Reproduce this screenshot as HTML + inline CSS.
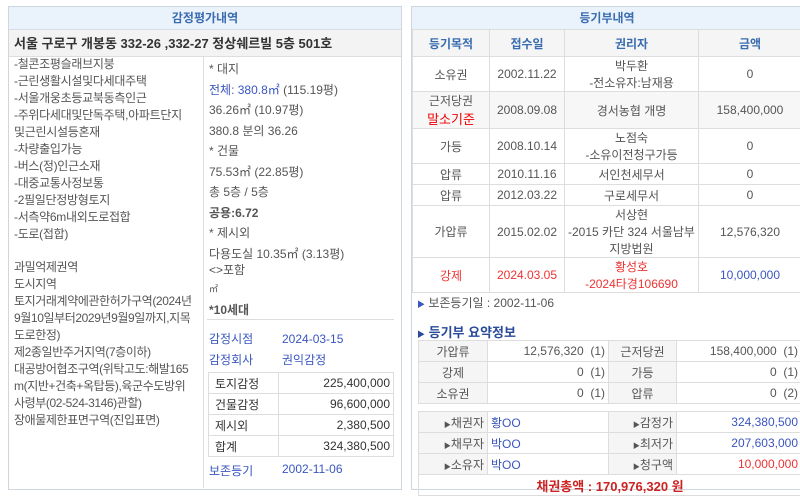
<!DOCTYPE html>
<html><head><meta charset="utf-8"><style>
*{margin:0;padding:0;box-sizing:border-box}
body{width:800px;height:488px;overflow:hidden;background:#fff;font-family:"Liberation Sans","Noto Sans CJK KR","NanumGothic",sans-serif;font-size:12px;color:#555;position:relative}
.a{position:absolute;white-space:nowrap}
.blue{color:#3a56c0}
.hd{background:#eaf2fc;color:#3a6cb0;font-weight:bold;text-align:center;line-height:22px;border-bottom:1px solid #d5dde8}
table{border-collapse:collapse;position:absolute}
td{border:1px solid #ddd;text-align:center;padding:0 3px}
</style></head><body>
<!-- left panel -->
<div class="a" style="left:8px;top:6px;width:394px;height:484px;border:1px solid #cfd6df"></div>
<div class="a hd" style="left:9px;top:7px;width:392px;height:23px">감정평가내역</div>
<div class="a" style="left:9px;top:30px;width:392px;height:27px;background:#f3f3f3;border-bottom:1px solid #ddd;font-size:13px;font-weight:bold;color:#333;padding-left:5px;line-height:27px">서울 구로구 개봉동 332-26 ,332-27 정상쉐르빌 5층 501호</div>
<div class="a" style="left:203px;top:57px;width:1px;height:431px;background:#ddd"></div>
<div class="a" style="left:14px;top:56px;line-height:17px;letter-spacing:-0.3px">-철콘조평슬래브지붕<br>-근린생활시설및다세대주택<br>-서울개웅초등교북동측인근<br>-주위다세대및단독주택,아파트단지<br>및근린시설등혼재<br>-차량출입가능<br>-버스(정)인근소재<br>-대중교통사정보통<br>-2필일단정방형토지<br>-서측약6m내외도로접합<br>-도로(접합)</div>
<div class="a" style="left:14px;top:259px;line-height:17px;letter-spacing:-0.4px">과밀억제권역<br>도시지역<br>토지거래계약에관한허가구역(2024년<br>9월10일부터2029년9월9일까지,지목<br>도로한정)<br>제2종일반주거지역(7층이하)<br>대공방어협조구역(위탁고도:해발165<br>m(지반+건축+옥탑등),육군수도방위<br>사령부(02-524-3146)관할)<br>장애물제한표면구역(진입표면)</div>
<div class="a" style="left:209px;top:59px;line-height:20.5px">* 대지<br><span class="blue">전체: 380.8㎡</span> (115.19평)<br>36.26㎡ (10.97평)<br>380.8 분의 36.26<br>* 건물<br>75.53㎡ (22.85평)<br>총 5층 / 5층<br><b>공용:6.72</b><br>* 제시외<br>다용도실 10.35㎡ (3.13평)</div>
<div class="a" style="left:209px;top:261px;line-height:18px">&lt;&gt;포함<br><span style="font-size:9px">㎡</span><br><b style="line-height:24px">*10세대</b></div>
<div class="a" style="left:207px;top:319px;width:187px;height:1px;background:#ddd"></div>
<div class="a blue" style="left:209px;top:329px;line-height:21px">감정시점<br>감정회사</div>
<div class="a blue" style="left:282px;top:329px;line-height:21px">2024-03-15<br>권익감정</div>
<table style="left:208px;top:372px;width:186px;font-size:12px;color:#333">
<tr style="height:21px"><td style="text-align:left;padding-left:6px;width:70px">토지감정</td><td style="text-align:right">225,400,000</td></tr>
<tr style="height:21px"><td style="text-align:left;padding-left:6px">건물감정</td><td style="text-align:right">96,600,000</td></tr>
<tr style="height:21px"><td style="text-align:left;padding-left:6px">제시외</td><td style="text-align:right">2,380,500</td></tr>
<tr style="height:21px"><td style="text-align:left;padding-left:6px">합계</td><td style="text-align:right">324,380,500</td></tr>
</table>
<div class="a blue" style="left:209px;top:462px">보존등기</div>
<div class="a blue" style="left:282px;top:462px">2002-11-06</div>

<!-- right panel -->
<div class="a" style="left:411px;top:6px;width:395px;height:484px;border:1px solid #cfd6df"></div>
<div class="a hd" style="left:412px;top:7px;width:390px;height:23px">등기부내역</div>
<table style="left:412px;top:29px;width:390px;color:#555">
<tr style="height:27px;background:#f5f5f5;color:#3a6cb0;font-weight:bold"><td style="width:77px">등기목적</td><td style="width:75px">접수일</td><td style="width:134px">권리자</td><td>금액</td></tr>
<tr style="height:35px"><td>소유권</td><td>2002.11.22</td><td>박두환<br>-전소유자:남재용</td><td>0</td></tr>
<tr style="height:34px;background:#f7f7f7"><td>근저당권<br><span style="color:#e00;font-size:13px">말소기준</span></td><td>2008.09.08</td><td>경서농협 개명</td><td>158,400,000</td></tr>
<tr style="height:35px"><td>가등</td><td>2008.10.14</td><td>노점숙<br>-소유이전청구가등</td><td>0</td></tr>
<tr style="height:21px"><td>압류</td><td>2010.11.16</td><td>서인천세무서</td><td>0</td></tr>
<tr style="height:21px"><td>압류</td><td>2012.03.22</td><td>구로세무서</td><td>0</td></tr>
<tr style="height:51px"><td>가압류</td><td>2015.02.02</td><td>서상현<br>-2015 카단 324 서울남부<br>지방법원</td><td>12,576,320</td></tr>
<tr style="height:35px;color:#e33"><td>강제</td><td>2024.03.05</td><td>황성호<br>-2024타경106690</td><td style="color:#3a56c0">10,000,000</td></tr>
</table>
<div class="a" style="left:417px;top:294px"><span style="font-size:8px;color:#3a56c0">▶</span> 보존등기일 : 2002-11-06</div>
<div class="a" style="left:417px;top:322px;font-weight:bold;color:#2a4a9a;font-size:13px"><span style="font-size:8px">▶</span> 등기부 요약정보</div>
<table style="left:418px;top:340px;width:384px">
<tr style="height:21px"><td style="width:69px;background:#f5f5f5">가압류</td><td style="text-align:right;width:121px">12,576,320 &nbsp;(1)</td><td style="width:68px;background:#f5f5f5">근저당권</td><td style="text-align:right">158,400,000 &nbsp;(1)</td></tr>
<tr style="height:21px"><td style="background:#f5f5f5">강제</td><td style="text-align:right">0 &nbsp;(1)</td><td style="background:#f5f5f5">가등</td><td style="text-align:right">0 &nbsp;(1)</td></tr>
<tr style="height:21px"><td style="background:#f5f5f5">소유권</td><td style="text-align:right">0 &nbsp;(1)</td><td style="background:#f5f5f5">압류</td><td style="text-align:right">0 &nbsp;(2)</td></tr>
</table>
<table style="left:418px;top:411px;width:384px">
<tr style="height:21px"><td style="width:69px;background:#f5f5f5;text-align:right"><span style="font-size:7px">▶</span>채권자</td><td style="text-align:left;width:121px;color:#3a56c0">황OO</td><td style="width:68px;background:#f5f5f5;text-align:right"><span style="font-size:7px">▶</span>감정가</td><td style="text-align:right;color:#3a56c0">324,380,500</td></tr>
<tr style="height:21px"><td style="background:#f5f5f5;text-align:right"><span style="font-size:7px">▶</span>채무자</td><td style="text-align:left;color:#3a56c0">박OO</td><td style="background:#f5f5f5;text-align:right"><span style="font-size:7px">▶</span>최저가</td><td style="text-align:right;color:#3a56c0">207,603,000</td></tr>
<tr style="height:21px"><td style="background:#f5f5f5;text-align:right"><span style="font-size:7px">▶</span>소유자</td><td style="text-align:left;color:#3a56c0">박OO</td><td style="background:#f5f5f5;text-align:right"><span style="font-size:7px">▶</span>청구액</td><td style="text-align:right;color:#e33">10,000,000</td></tr>
<tr style="height:21px"><td colspan="4" style="color:#c22;font-weight:bold;font-size:13px">채권총액 : 170,976,320 원</td></tr>
</table>
</body></html>
